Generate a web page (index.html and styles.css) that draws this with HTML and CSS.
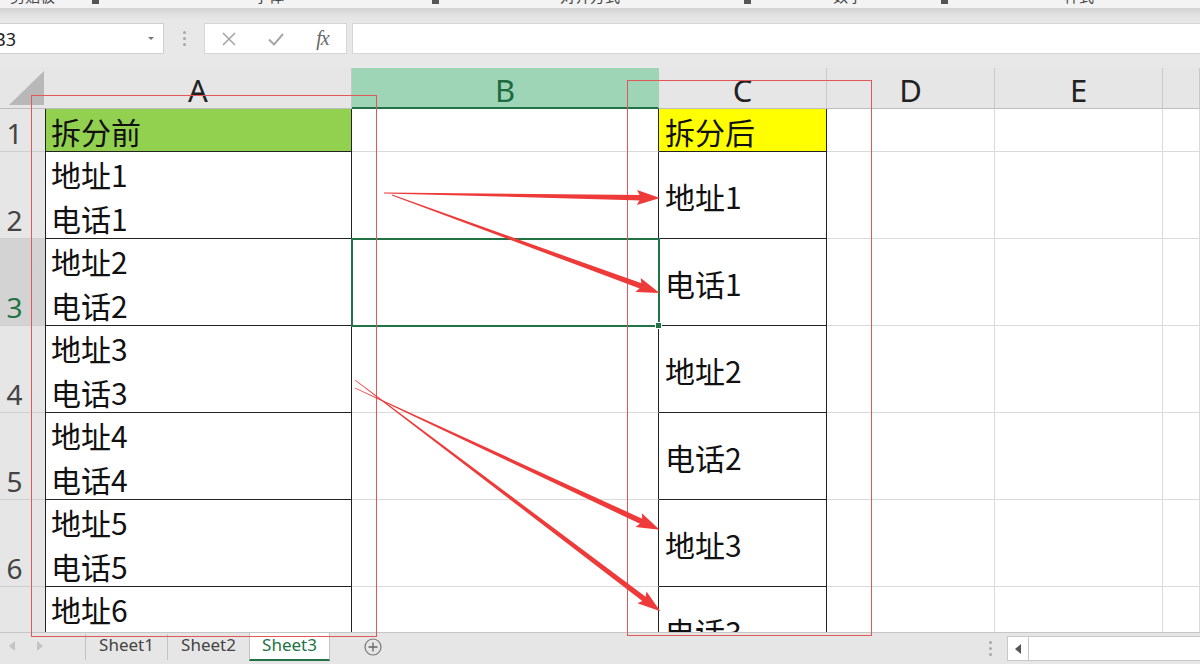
FILE: index.html
```html
<!DOCTYPE html>
<html lang="zh-CN">
<head>
<meta charset="utf-8">
<title>拆分</title>
<link rel="stylesheet" href="styles.css">
</head>
<body>
<div class="app">
  <div class="ribbon">
    <span class="rlabel l1">剪贴板</span>
    <span class="launch k1"></span>
    <span class="rlabel l2">字体</span>
    <span class="launch k2"></span>
    <span class="rlabel l3">对齐方式</span>
    <span class="launch k3"></span>
    <span class="rlabel l4">数字</span>
    <span class="launch k4"></span>
    <span class="rlabel l5">样式</span>
  </div>

  <div class="fbar">
    <div class="namebox"><span class="ref">B3</span><span class="dd"></span></div>
    <div class="vsep"><i></i><i></i><i></i></div>
    <div class="fbtns">
      <span class="fbtn"><svg width="16" height="16" viewBox="0 0 16 16"><path d="M2 2L14 14M14 2L2 14" stroke="#a6a6a6" stroke-width="1.6" fill="none"/></svg></span>
      <span class="fbtn"><svg width="18" height="16" viewBox="0 0 18 16"><path d="M2 8.5L7 13.5L16 3" stroke="#a6a6a6" stroke-width="2" fill="none"/></svg></span>
      <span class="fbtn fx">fx</span>
    </div>
    <div class="finput"></div>
  </div>

  <div class="sheet">
    <div class="grid">
      <div class="corner"><div class="tri-corner"></div></div>
      <div class="ch">A</div>
      <div class="ch sel">B</div>
      <div class="ch">C</div>
      <div class="ch">D</div>
      <div class="ch">E</div>
      <div class="ch"></div>

      <div class="rh">1</div>
      <div class="c a r1 green">拆分前</div>
      <div class="c b"></div>
      <div class="c cc r1 yellow">拆分后</div>
      <div class="c"></div><div class="c"></div><div class="c"></div>

      <div class="rh">2</div>
      <div class="c a"><div class="lines"><div>地址1</div><div>电话1</div></div></div>
      <div class="c b"></div>
      <div class="c cc mid">地址1</div>
      <div class="c"></div><div class="c"></div><div class="c"></div>

      <div class="rh rsel">3</div>
      <div class="c a"><div class="lines"><div>地址2</div><div>电话2</div></div></div>
      <div class="c b active"><span class="handle"></span></div>
      <div class="c cc mid">电话1</div>
      <div class="c"></div><div class="c"></div><div class="c"></div>

      <div class="rh">4</div>
      <div class="c a"><div class="lines"><div>地址3</div><div>电话3</div></div></div>
      <div class="c b"></div>
      <div class="c cc mid">地址2</div>
      <div class="c"></div><div class="c"></div><div class="c"></div>

      <div class="rh">5</div>
      <div class="c a"><div class="lines"><div>地址4</div><div>电话4</div></div></div>
      <div class="c b"></div>
      <div class="c cc mid">电话2</div>
      <div class="c"></div><div class="c"></div><div class="c"></div>

      <div class="rh">6</div>
      <div class="c a"><div class="lines"><div>地址5</div><div>电话5</div></div></div>
      <div class="c b"></div>
      <div class="c cc mid">地址3</div>
      <div class="c"></div><div class="c"></div><div class="c"></div>

      <div class="rh">7</div>
      <div class="c a top"><div class="lines"><div>地址6</div><div>电话6</div></div></div>
      <div class="c b"></div>
      <div class="c cc mid">电话3</div>
      <div class="c"></div><div class="c"></div><div class="c"></div>
    </div>
  </div>

  <div class="tabbar">
    <div class="nav"><span class="navtri lft"></span><span class="navtri rgt"></span></div>
    <div class="tab">Sheet1</div>
    <div class="tab">Sheet2</div>
    <div class="tab active">Sheet3</div>
    <div class="add"><svg width="18" height="18" viewBox="0 0 18 18"><circle cx="9" cy="9" r="8" stroke="#777" stroke-width="1.2" fill="none"/><path d="M9 4.5V13.5M4.5 9H13.5" stroke="#666" stroke-width="1.3"/></svg></div>
    <div class="spacer"></div>
    <div class="dots"><i></i><i></i><i></i></div>
    <div class="hscroll"><div class="sbtn"><span class="sarrow"></span></div><div class="track"></div></div>
  </div>

  <svg class="annot" width="1200" height="664" viewBox="0 0 1200 664">
    <rect x="31.5" y="95.5" width="345" height="541" fill="none" stroke="#e25858" stroke-width="1"/>
    <rect x="627.5" y="80.5" width="244" height="555" fill="none" stroke="#e25858" stroke-width="1"/>
    <g fill="#ef3a3a">
      <g transform="translate(384 193) rotate(1.04)">
        <polygon points="0,-0.4 258,-2.8 258,2.8 0,0.4"/>
        <polygon points="253,-7.5 276,0 253,7.5 257,0"/>
      </g>
      <g transform="translate(392 195) rotate(20.09)">
        <polygon points="0,-0.4 267,-2.8 267,2.8 0,0.4"/>
        <polygon points="262,-7.5 285,0 262,7.5 266,0"/>
      </g>
      <g transform="translate(355 388) rotate(24.97)">
        <polygon points="0,-0.4 318,-2.8 318,2.8 0,0.4"/>
        <polygon points="313,-7.5 336,0 313,7.5 317,0"/>
      </g>
      <g transform="translate(355 380) rotate(37.14)">
        <polygon points="0,-0.4 365,-2.8 365,2.8 0,0.4"/>
        <polygon points="360,-7.5 383,0 360,7.5 364,0"/>
      </g>
    </g>
  </svg>
</div>
</body>
</html>
```

FILE: styles.css
```css
* { box-sizing: border-box; margin: 0; padding: 0; }
html, body { width: 1200px; height: 664px; overflow: hidden; }
body {
  font-family: "Noto Sans", "Noto Sans CJK SC", sans-serif;
  background: #e6e6e6;
  color: #222;
}
.app {
  position: relative;
  width: 1200px;
  height: 664px;
  display: flex;
  flex-direction: column;
}

/* ribbon remnant */
.ribbon {
  height: 8px;
  flex: none;
  background: #f3f3f3;
  overflow: hidden;
  display: flex;
  align-items: flex-start;
  font-family: "Noto Sans CJK SC", sans-serif;
  font-size: 15px;
  line-height: 16px;
  color: #444;
}
.rlabel { display: block; margin-top: -12px; white-space: nowrap; }
.launch { display: block; width: 7px; height: 4px; background: #555; margin-top: 0; }
.l1 { margin-left: 10px; }
.k1 { margin-left: 37px; }
.l2 { margin-left: 155px; }
.k2 { margin-left: 148px; }
.l3 { margin-left: 121px; }
.k3 { margin-left: 124px; }
.l4 { margin-left: 82px; }
.k4 { margin-left: 78px; }
.l5 { margin-left: 116px; }

/* formula bar */
.fbar {
  height: 60px;
  flex: none;
  background: linear-gradient(#d2d2d2 0, #e2e2e2 7px, #e8e8e8 13px, #e8e8e8 100%);
  padding-top: 15px;
  display: flex;
  align-items: flex-start;
}
.namebox {
  width: 174px;
  height: 31px;
  margin-left: -10px;
  background: #fff;
  border: 1px solid #cfcfcf;
  display: flex;
  align-items: center;
  padding-left: 3px;
  font-size: 18px;
  color: #222;
}
.ref { flex: 1; }
.dd {
  width: 0; height: 0;
  border-left: 3px solid transparent;
  border-right: 3px solid transparent;
  border-top: 3px solid #777;
  margin-right: 9px;
}
.vsep {
  width: 40px;
  height: 31px;
  display: flex;
  flex-direction: column;
  align-items: center;
  justify-content: center;
  gap: 3px;
}
.vsep i, .dots i { display: block; width: 3px; height: 3px; border-radius: 50%; background: #a8a8a8; }
.fbtns {
  width: 143px;
  height: 31px;
  background: #fff;
  border: 1px solid #d6d6d6;
  display: flex;
  align-items: center;
}
.fbtn {
  width: 47px;
  display: flex;
  justify-content: center;
  align-items: center;
}
.fx {
  font-family: "Liberation Serif", serif;
  font-style: italic;
  font-size: 20px;
  color: #666;
  letter-spacing: -1px;
}
.finput {
  flex: 1;
  height: 31px;
  margin-left: 5px;
  background: #fff;
  border: 1px solid #d6d6d6;
  border-right: none;
}

/* sheet */
.sheet {
  height: 564px;
  flex: none;
  overflow: hidden;
  background: #fff;
}
.grid {
  display: grid;
  grid-template-columns: 45px 307px 307px 168px 168px 168px 37px;
  grid-template-rows: 41px 43px repeat(6, 87px);
}
.corner {
  background: #e6e6e6;
  border-bottom: 1px solid #bdbdbd;
  display: flex;
  justify-content: flex-end;
  align-items: flex-end;
  padding: 0 1px 3px 0;
}
.tri-corner {
  width: 35px;
  height: 34px;
  background: #b8b8b8;
  clip-path: polygon(100% 0, 100% 100%, 0 100%);
}
.ch {
  background: #e6e6e6;
  border-right: 1px solid #c9c9c9;
  border-bottom: 1px solid #bdbdbd;
  font-size: 31px;
  color: #222;
  display: flex;
  align-items: center;
  justify-content: center;
  padding-top: 4px;
}
.ch.sel {
  background: #9fd5b7;
  color: #1d6b40;
  border-bottom: 2px solid #217346;
  border-right-color: #9fd5b7;
}
.rh {
  background: #e6e6e6;
  border-bottom: 1px solid #cfcfcf;
  font-size: 28px;
  line-height: 36px;
  color: #444;
  display: flex;
  align-items: flex-end;
  justify-content: center;
  padding-right: 16px;
}
.rh.rsel { background: #d3d3d3; color: #217346; }

.c {
  background: #fff;
  border-right: 1px solid #dadada;
  border-bottom: 1px solid #dadada;
  font-family: "Noto Sans CJK SC", sans-serif;
  font-size: 30px;
  color: #111;
  overflow: hidden;
  white-space: nowrap;
}
.c.a {
  border-left: 1px solid #222;
  border-right-color: #222;
  border-bottom-color: #222;
  padding-left: 5px;
  display: flex;
  flex-direction: column;
  justify-content: flex-end;
}
.c.a.top { justify-content: flex-start; }
.lines { line-height: 44px; margin-bottom: -2px; }
.c.a.top .lines { margin-bottom: 0; }
.c.b { border-right-color: #222; }
.c.cc {
  border-right-color: #222;
  border-bottom-color: #222;
  padding-left: 6px;
  display: flex;
  align-items: center;
}
.c.r1 { line-height: 40px; }
.c.a.r1 { flex-direction: row; justify-content: flex-start; align-items: flex-end; }
.c.cc.r1 { align-items: flex-end; }
.c.mid { padding-top: 2px; }
.green { background: #92d050; }
.yellow { background: #ffff00; }
.c.b.active {
  position: relative;
  outline: 2px solid #217346;
  outline-offset: -1px;
  z-index: 2;
  overflow: visible;
}
.handle {
  position: absolute;
  right: -4px;
  bottom: -4px;
  width: 7px;
  height: 7px;
  background: #217346;
  border: 1px solid #fff;
}

/* tabs */
.tabbar {
  height: 32px;
  flex: none;
  background: #e6e6e6;
  border-top: 1px solid #c6c6c6;
  display: flex;
  align-items: flex-start;
  font-size: 17px;
  color: #444;
}
.nav {
  width: 85px;
  height: 26px;
  display: flex;
  align-items: center;
  padding-left: 9px;
  gap: 22px;
}
.navtri { width: 0; height: 0; border-top: 5px solid transparent; border-bottom: 5px solid transparent; }
.navtri.lft { border-right: 6px solid #c4c4c4; }
.navtri.rgt { border-left: 6px solid #c4c4c4; }
.tab {
  width: 82px;
  height: 26px;
  border-left: 1px solid #c3c3c3;
  margin-top: 1px;
  display: flex;
  align-items: center;
  justify-content: center;
  line-height: 1;
  padding-bottom: 5px;
}
.tab.active {
  width: 81px;
  margin-top: 0;
  height: 28px;
  background: #fff;
  color: #217346;
  border-right: 1px solid #c3c3c3;
  border-bottom: 2px solid #217346;
  padding-bottom: 3px;
}
.add { margin-left: 34px; margin-top: 5px; display: flex; }
.spacer { flex: 1; }
.dots {
  width: 14px;
  height: 31px;
  display: flex;
  flex-direction: column;
  align-items: center;
  justify-content: center;
  gap: 3px;
  margin-right: 10px;
}
.hscroll {
  width: 193px;
  height: 25px;
  margin-top: 3px;
  display: flex;
  background: #fff;
  border: 1px solid #c8c8c8;
  border-right: none;
}
.sbtn {
  width: 21px;
  border-right: 1px solid #c8c8c8;
  display: flex;
  align-items: center;
  justify-content: center;
}
.sarrow { width: 0; height: 0; border-top: 5px solid transparent; border-bottom: 5px solid transparent; border-right: 6px solid #555; }
.track { flex: 1; }

.annot {
  position: absolute;
  left: 0;
  top: 0;
  pointer-events: none;
  z-index: 10;
}
```
